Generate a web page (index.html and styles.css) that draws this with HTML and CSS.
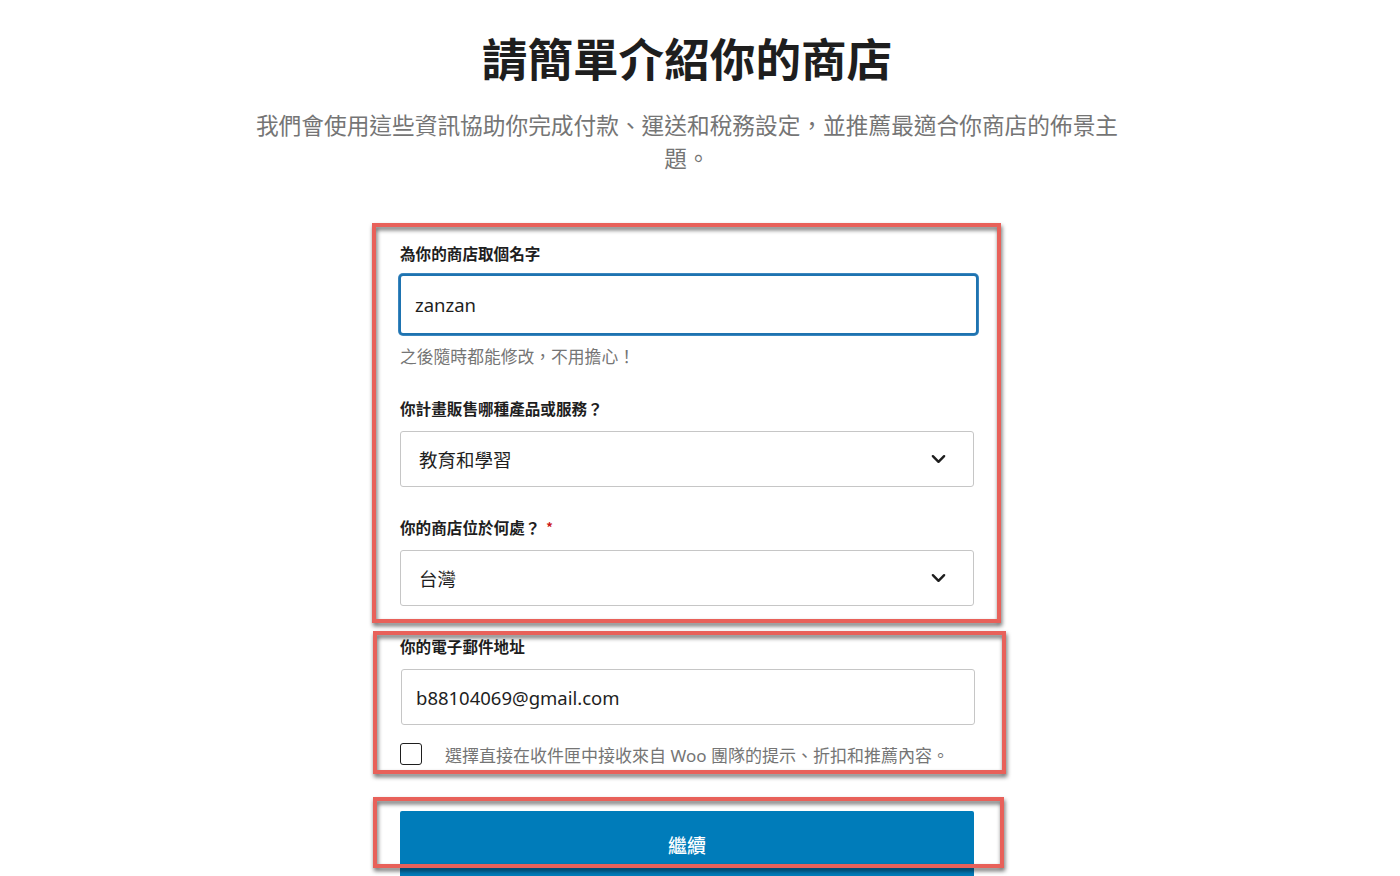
FILE: index.html
```html
<!DOCTYPE html>
<html lang="zh-Hant">
<head>
<meta charset="utf-8">
<title>請簡單介紹你的商店</title>
<link rel="stylesheet" href="styles.css">
</head>
<body>
<div class="page">
  <header class="intro">
    <h1 class="title">請簡單介紹你的商店</h1>
    <p class="subtitle">我們會使用這些資訊協助你完成付款、運送和稅務設定，並推薦最適合你商店的佈景主題。</p>
  </header>

  <form class="form">
    <label class="label first">為你的商店取個名字</label>
    <div class="field focused">zanzan</div>
    <p class="help">之後隨時都能修改，不用擔心！</p>

    <label class="label">你計畫販售哪種產品或服務？</label>
    <div class="field select">
      <span class="select-text">教育和學習</span>
      <svg class="chevron" viewBox="0 0 16 10" width="15" height="10"><path d="M2 2l6 6 6-6" fill="none" stroke="#1e1e1e" stroke-width="2.6" stroke-linecap="round" stroke-linejoin="round"/></svg>
    </div>

    <label class="label">你的商店位於何處？<span class="req">*</span></label>
    <div class="field select">
      <span class="select-text">台灣</span>
      <svg class="chevron" viewBox="0 0 16 10" width="15" height="10"><path d="M2 2l6 6 6-6" fill="none" stroke="#1e1e1e" stroke-width="2.6" stroke-linecap="round" stroke-linejoin="round"/></svg>
    </div>

    <label class="label">你的電子郵件地址</label>
    <div class="field email">b88104069@gmail.com</div>

    <div class="check-row">
      <span class="checkbox"></span>
      <span class="check-text">選擇直接在收件匣中接收來自 Woo 團隊的提示、折扣和推薦內容。</span>
    </div>

    <div class="button">繼續</div>
  </form>

  <div class="mark mark-1"></div>
  <div class="mark mark-2"></div>
  <div class="mark mark-3"></div>
</div>
</body>
</html>
```

FILE: styles.css
```css
html, body {
  margin: 0;
  padding: 0;
  background: #ffffff;
  overflow: hidden;
}

.page {
  position: relative;
  width: 1374px;
  height: 876px;
  overflow: hidden;
  font-family: "Noto Sans", "Noto Sans CJK TC", sans-serif;
  color: #1e1e1e;
}

.intro {
  display: flex;
  flex-direction: column;
  align-items: center;
  padding-top: 30px;
}

.title {
  margin: 0;
  font-family: "Noto Sans CJK TC", sans-serif;
  font-size: 45.6px;
  line-height: 54px;
  font-weight: 700;
  color: #1e1e1e;
}

.subtitle {
  margin: 24px 0 0;
  width: 872px;
  text-align: center;
  font-family: "Noto Sans CJK TC", sans-serif;
  font-size: 22.7px;
  line-height: 33px;
  color: #757575;
}

.form {
  width: 574px;
  margin: 0 auto;
  display: flex;
  flex-direction: column;
}

.label {
  display: block;
  font-family: "Noto Sans CJK TC", sans-serif;
  font-size: 15.6px;
  line-height: 20px;
  font-weight: 600;
  color: #1e1e1e;
  margin-top: 30px;
}

.label.first {
  margin-top: 69px;
}

.req {
  color: #cc1818;
  font-size: 13px;
  margin-left: 6px;
  vertical-align: 2px;
}

.field {
  box-sizing: border-box;
  height: 56px;
  margin-top: 13px;
  border: 1px solid #c6c6c6;
  border-radius: 3px;
  display: flex;
  align-items: center;
  padding: 0 14px;
  font-size: 18.5px;
  color: #1e1e1e;
  background: #fff;
}

.field.focused {
  height: 61px;
  margin-top: 11px;
  margin-left: -1px;
  margin-right: -4px;
  padding-left: 14px;
  border: 2px solid #1e73b0;
  border-radius: 4px;
  box-shadow: 0 0 0 1px #3a86be;
}

.field.email {
  margin-left: 1px;
  margin-right: -1px;
}

.field.select {
  justify-content: space-between;
  padding: 0 27px 0 18px;
  font-family: "Noto Sans CJK TC", sans-serif;
}

.select-text {
  font-size: 18.5px;
}

.chevron {
  display: block;
}

.help {
  margin: 9px 0 0;
  font-family: "Noto Sans CJK TC", sans-serif;
  font-size: 16.8px;
  line-height: 24px;
  color: #757575;
}

.check-row {
  display: flex;
  align-items: center;
  height: 24px;
  margin-top: 17px;
}

.checkbox {
  box-sizing: border-box;
  width: 22px;
  height: 22px;
  border: 1.5px solid #1e1e1e;
  border-radius: 3px;
  flex-shrink: 0;
}

.check-text {
  margin-left: 23px;
  font-family: "Noto Sans", "Noto Sans CJK TC", sans-serif;
  font-size: 17px;
  color: #757575;
  white-space: nowrap;
}

.button {
  margin-top: 45px;
  height: 70px;
  background: #007cba;
  color: #ffffff;
  display: flex;
  justify-content: center;
  padding-top: 20px;
  box-sizing: border-box;
  font-family: "Noto Sans CJK TC", sans-serif;
  font-size: 19px;
  font-weight: 500;
  border-radius: 2px;
}

.mark {
  position: absolute;
  box-sizing: border-box;
  border: 4px solid #e8615a;
  filter: drop-shadow(1px 3px 2px rgba(0, 0, 0, 0.6));
  pointer-events: none;
}

.mark-1 {
  left: 372px;
  top: 223px;
  width: 629px;
  height: 400px;
}

.mark-2 {
  left: 373px;
  top: 631px;
  width: 633px;
  height: 143px;
}

.mark-3 {
  left: 373px;
  top: 797px;
  width: 631px;
  height: 71px;
}
```
